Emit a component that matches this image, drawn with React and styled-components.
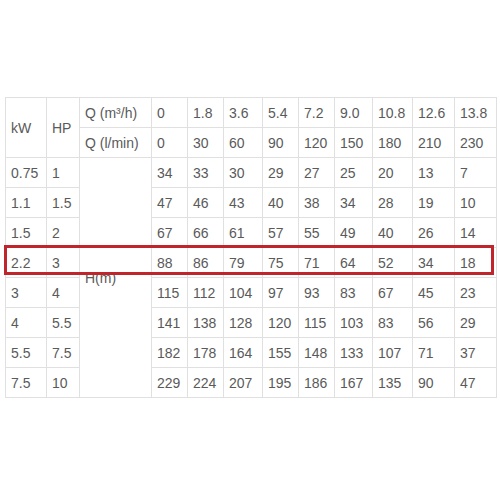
import React from 'react'
import styled, { createGlobalStyle } from 'styled-components'

const GlobalStyle = createGlobalStyle`
	html, body {
		margin: 0;
		padding: 0;
		background: #fff;
	}
	body {
		font-family: 'Liberation Sans', Arial, sans-serif;
	}
`

const Page = styled.div`
	width: 500px;
	height: 500px;
	padding: 97px 0 0 5px;
	box-sizing: border-box;
`

const Wrap = styled.div`
	position: relative;
	width: 491px;
`

const Table = styled.table`
	width: 491px;
	table-layout: fixed;
	border-collapse: collapse;
	font-size: 14px;
	color: #5a5a5a;
`

const Cell = styled.td`
	height: 29px;
	padding: 0 0 0 5px;
	border: 1px solid #e0e0e0;
	vertical-align: middle;
	white-space: nowrap;
	line-height: 16px;
`

const Highlight = styled.div`
	position: absolute;
	left: -1px;
	top: 148px;
	width: 490px;
	height: 30px;
	border: 3px solid #c0252c;
	box-sizing: border-box;
	pointer-events: none;
`

const widths = [41, 33, 72, 36, 36, 39, 36, 36, 38, 40, 42, 42]

const flowM3 = ['0', '1.8', '3.6', '5.4', '7.2', '9.0', '10.8', '12.6', '13.8']
const flowL = ['0', '30', '60', '90', '120', '150', '180', '210', '230']

const rows = [
	['0.75', '1', [34, 33, 30, 29, 27, 25, 20, 13, 7]],
	['1.1', '1.5', [47, 46, 43, 40, 38, 34, 28, 19, 10]],
	['1.5', '2', [67, 66, 61, 57, 55, 49, 40, 26, 14]],
	['2.2', '3', [88, 86, 79, 75, 71, 64, 52, 34, 18]],
	['3', '4', [115, 112, 104, 97, 93, 83, 67, 45, 23]],
	['4', '5.5', [141, 138, 128, 120, 115, 103, 83, 56, 29]],
	['5.5', '7.5', [182, 178, 164, 155, 148, 133, 107, 71, 37]],
	['7.5', '10', [229, 224, 207, 195, 186, 167, 135, 90, 47]],
]

export default function App() {
	return (
		<>
			<GlobalStyle />
			<Page>
				<Wrap>
					<Table>
						<colgroup>
							{widths.map((w, i) => (
								<col key={i} style={{ width: w }} />
							))}
						</colgroup>
						<tbody>
							<tr>
								<Cell rowSpan={2}>kW</Cell>
								<Cell rowSpan={2}>HP</Cell>
								<Cell>Q (m³/h)</Cell>
								{flowM3.map((v, i) => (
									<Cell key={i}>{v}</Cell>
								))}
							</tr>
							<tr>
								<Cell>Q (l/min)</Cell>
								{flowL.map((v, i) => (
									<Cell key={i}>{v}</Cell>
								))}
							</tr>
							{rows.map(([kw, hp, vals], r) => (
								<tr key={r}>
									<Cell>{kw}</Cell>
									<Cell>{hp}</Cell>
									{r === 0 && <Cell rowSpan={rows.length}>H(m)</Cell>}
									{vals.map((v, i) => (
										<Cell key={i}>{v}</Cell>
									))}
								</tr>
							))}
						</tbody>
					</Table>
					<Highlight />
				</Wrap>
			</Page>
		</>
	)
}
